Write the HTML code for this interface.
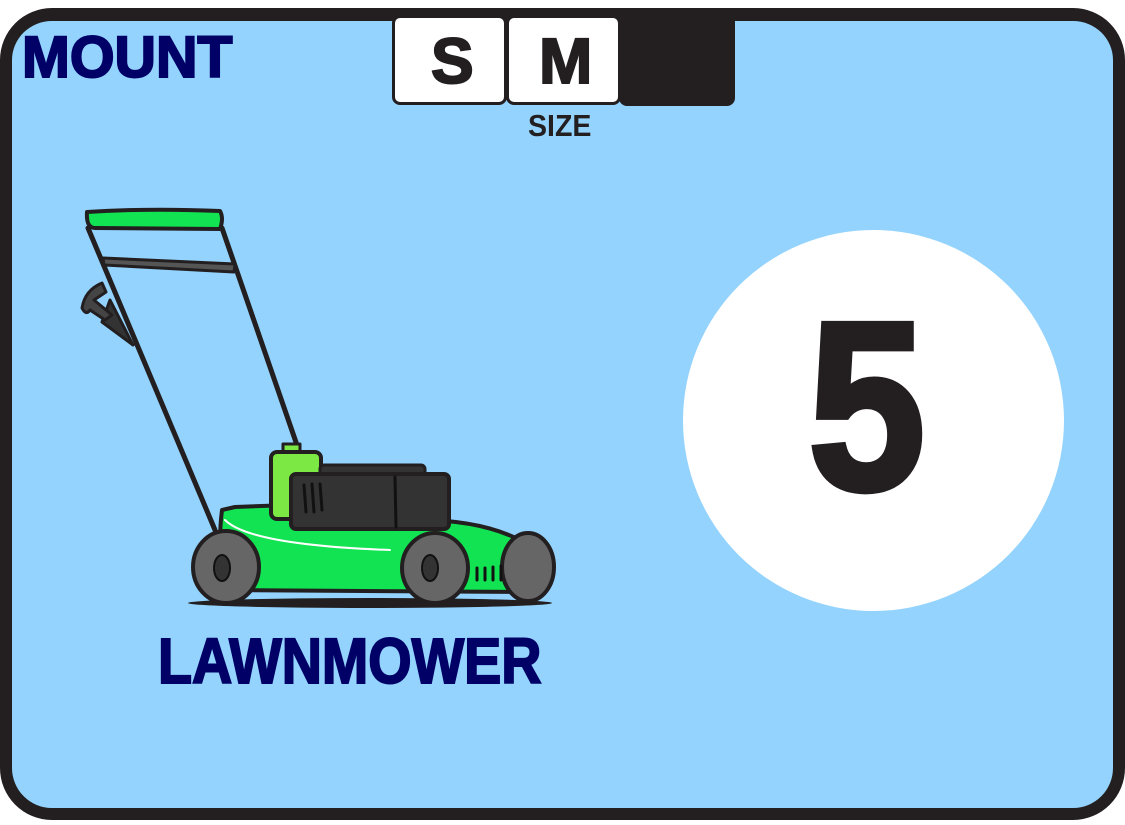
<!DOCTYPE html>
<html><head><style>
html,body{margin:0;padding:0;background:#fff;width:1125px;height:825px;overflow:hidden}
.card{position:absolute;left:0;top:8px;width:1125px;height:812px;box-sizing:border-box;background:#93d3fd;border:12px solid #231f20;border-top-width:13px;border-radius:52px}
.t{position:absolute;font-family:"Liberation Sans",sans-serif;font-weight:bold;white-space:nowrap}
.box{position:absolute;top:15px;height:90px;background:#fff;border:3px solid #231f20;border-radius:8px;box-sizing:border-box}
</style></head><body>
<div class="card"></div>
<div class="t" style="left:22px;top:24px;font-size:58px;color:#000066;transform:scaleX(0.99);transform-origin:left;-webkit-text-stroke:2px #000066">MOUNT</div>
<div class="box" style="left:392px;width:115px"></div>
<div class="box" style="left:506px;width:115px"></div>
<div style="position:absolute;left:619px;top:15px;width:116px;height:91px;background:#231f20;border-radius:0 0 8px 8px"></div>
<div class="t" style="left:431px;top:24px;font-size:64px;color:#231f20;-webkit-text-stroke:2px #231f20">S</div>
<div class="t" style="left:539px;top:24px;font-size:64px;color:#231f20;-webkit-text-stroke:2px #231f20">M</div>
<div class="t" style="left:528px;top:108px;font-size:31px;color:#231f20;transform:scaleX(0.92);transform-origin:left">SIZE</div>
<div style="position:absolute;left:683px;top:230px;width:381px;height:381px;border-radius:50%;background:#fff"></div>
<div class="t" style="left:808px;top:286px;font-size:240px;color:#231f20;line-height:1;transform:scaleX(0.88);transform-origin:left;-webkit-text-stroke:6px #231f20">5</div>
<div class="t" style="left:158px;top:624px;font-size:64px;color:#000066;transform:scaleX(0.87);transform-origin:left;-webkit-text-stroke:2px #000066">LAWNMOWER</div>
<svg width="1125" height="825" style="position:absolute;left:0;top:0" stroke-linejoin="round" stroke-linecap="round">
<ellipse cx="370" cy="603" rx="182" ry="5" fill="#231f20"/>
<path d="M88 228 L215 530" stroke="#231f20" stroke-width="5" fill="none"/>
<path d="M222 228 L298 448" stroke="#231f20" stroke-width="5" fill="none"/>
<path d="M87 212 Q86 228 95 228 L220 229 Q224 218 220 211 Q150 208 87 212Z" fill="#12e352" stroke="#231f20" stroke-width="4"/>
<path d="M103 258 L235 264 L234 272 L104 265Z" fill="#555" stroke="#231f20" stroke-width="3"/>
<path d="M110 300 L133 345 L102 322Z" fill="#333" stroke="#231f20" stroke-width="3"/>
<path d="M82 308 Q85 290 102 283 L106 292 L94 300 L112 315 L105 320 L90 310 Q86 316 82 308Z" fill="#444" stroke="#231f20" stroke-width="3"/>
<path d="M222 510 Q218 540 222 590 L520 592 Q540 570 520 540 Q480 520 420 520 L290 505 L235 507Z" fill="#12e352" stroke="#231f20" stroke-width="4"/>
<path d="M225 520 Q250 545 390 550" stroke="#fff" stroke-width="2" fill="none"/>
<rect x="283" y="444" width="17" height="12" fill="#7ce843" stroke="#231f20" stroke-width="3"/>
<rect x="271" y="452" width="50" height="67" rx="6" fill="#7ce843" stroke="#231f20" stroke-width="4"/>
<rect x="320" y="465" width="105" height="20" rx="4" fill="#333" stroke="#231f20" stroke-width="3"/>
<rect x="291" y="474" width="158" height="55" rx="5" fill="#333" stroke="#231f20" stroke-width="4"/>
<path d="M395 477 L396 527 M304 485 L306 512 M312 484 L314 512 M320 484 L322 510" stroke="#111" stroke-width="3"/>
<g fill="#666" stroke="#231f20" stroke-width="4">
<ellipse cx="226" cy="567" rx="33" ry="36"/>
<ellipse cx="528" cy="567" rx="26" ry="34"/>
<ellipse cx="435" cy="568" rx="33" ry="35"/>
</g>
<g fill="#333" stroke="#111" stroke-width="2">
<ellipse cx="222" cy="568" rx="8" ry="13"/>
<ellipse cx="430" cy="568" rx="8" ry="13"/>
</g>
<path d="M477 568 L477 580 M485 568 L485 580 M493 567 L493 580 M501 566 L501 580" stroke="#111" stroke-width="3"/>
</svg>
</body></html>
